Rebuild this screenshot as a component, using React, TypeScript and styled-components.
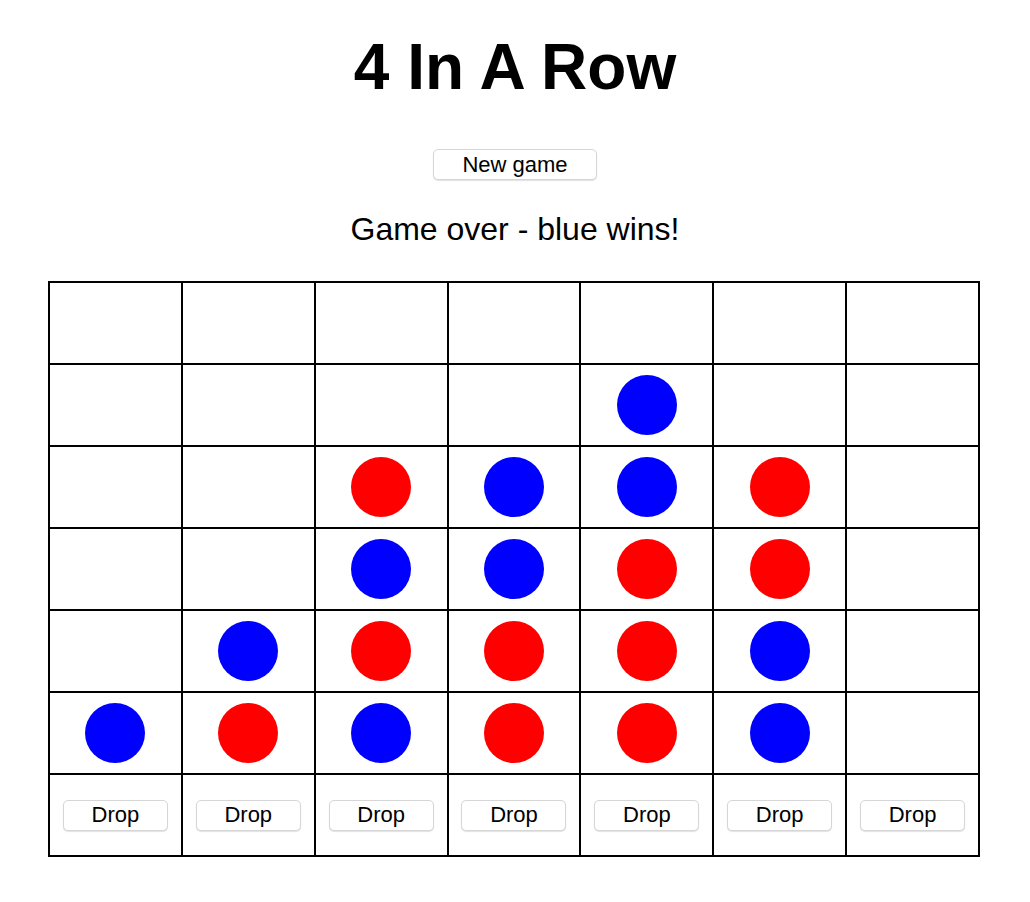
import React from "react";
import styled, { createGlobalStyle } from "styled-components";

const GlobalStyle = createGlobalStyle`
  html, body {
    margin: 0;
    padding: 0;
    background: #ffffff;
  }
  body {
    font-family: "Liberation Sans", Arial, Helvetica, sans-serif;
    color: #000000;
  }
`;

const Page = styled.div`
  display: flex;
  flex-direction: column;
  align-items: center;
  padding-top: 30px;
  padding-bottom: 40px;
`;

const Title = styled.h1`
  margin: 0;
  font-size: 64px;
  line-height: 74px;
  font-weight: 700;
  text-align: center;
`;

const Button = styled.button<{ $width: number }>`
  width: ${(p) => p.$width}px;
  height: 31px;
  padding: 0;
  background: #ffffff;
  border: 1px solid #d6d6d6;
  border-radius: 5px;
  box-shadow: 0 1px 1px rgba(0, 0, 0, 0.12);
  font-family: "Liberation Sans", Arial, Helvetica, sans-serif;
  font-size: 22px;
  color: #000000;
  cursor: pointer;
  display: flex;
  align-items: center;
  justify-content: center;
`;

const NewGameRow = styled.div`
  margin-top: 45px;
`;

const Status = styled.p`
  margin: 31px 0 0;
  font-size: 32px;
  line-height: 37px;
  text-align: center;
`;

const Board = styled.div`
  margin: 33px 0 0 -2px;
  width: 932px;
  box-sizing: border-box;
  display: grid;
  grid-template-columns: repeat(7, 1fr);
  grid-auto-rows: 80px;
  gap: 2px;
  border: 2px solid #000000;
  background: #000000;
`;

const Cell = styled.div`
  background: #ffffff;
  display: flex;
  align-items: center;
  justify-content: center;
`;

const Disc = styled.div<{ $color: "red" | "blue" }>`
  width: 60px;
  height: 60px;
  border-radius: 50%;
  background: ${(p) => (p.$color === "red" ? "#ff0000" : "#0000ff")};
`;

type Slot = "" | "r" | "b";

const board: Slot[][] = [
  ["", "", "", "", "", "", ""],
  ["", "", "", "", "b", "", ""],
  ["", "", "r", "b", "b", "r", ""],
  ["", "", "b", "b", "r", "r", ""],
  ["", "b", "r", "r", "r", "b", ""],
  ["b", "r", "b", "r", "r", "b", ""],
];

export default function App() {
  return (
    <>
      <GlobalStyle />
      <Page>
        <Title>4 In A Row</Title>
        <NewGameRow>
          <Button $width={164}>New game</Button>
        </NewGameRow>
        <Status>Game over - blue wins!</Status>
        <Board>
          {board.map((row, ri) =>
            row.map((slot, ci) => (
              <Cell key={`${ri}-${ci}`}>
                {slot === "r" && <Disc $color="red" />}
                {slot === "b" && <Disc $color="blue" />}
              </Cell>
            ))
          )}
          {Array.from({ length: 7 }).map((_, ci) => (
            <Cell key={`drop-${ci}`}>
              <Button $width={105}>Drop</Button>
            </Cell>
          ))}
        </Board>
      </Page>
    </>
  );
}
